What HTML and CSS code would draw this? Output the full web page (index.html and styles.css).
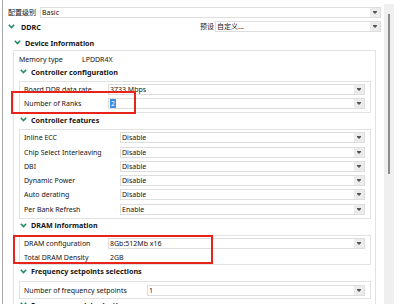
FILE: index.html
```html
<!DOCTYPE html>
<html lang="zh-CN">
<head>
    <meta charset="UTF-8">
    <title>DDRC 配置</title>
    <link rel="stylesheet" href="styles.css">
</head>
<body>

<div class="window">
    <div class="main">

        <!-- config level -->
        <div class="top-row">
            <span class="top-label">配置级别</span>
            <div class="select wide"><span class="value">Basic</span><span class="arrow"></span></div>
        </div>

        <div class="ddrc-row">
            <svg class="chev chev-ddrc" width="7" height="5" viewBox="0 0 7 5"><path d="M0.8 0.8 L3.5 3.6 L6.2 0.8" /></svg>
            <span class="title">DDRC</span>
            <span class="spacer"></span>
            <span class="preset-label">预设</span>
            <div class="select preset"><span class="value">自定义...</span><span class="arrow"></span></div>
        </div>

        <div class="head head-di">
            <svg class="chev" width="7" height="5" viewBox="0 0 7 5"><path d="M0.8 0.8 L3.5 3.6 L6.2 0.8" /></svg>
            <span class="title">Device Information</span>
        </div>

        <div class="outer-box">
            <div class="mem-row">
                <span class="mem-label">Memory type</span>
                <span>LPDDR4X</span>
            </div>

            <div class="head">
                <svg class="chev" width="7" height="5" viewBox="0 0 7 5"><path d="M0.8 0.8 L3.5 3.6 L6.2 0.8" /></svg>
                <span class="title">Controller configuration</span>
            </div>
            <div class="box">
                <div class="row">
                    <span class="label w84">Board DDR data rate</span>
                    <div class="select"><span class="value">3733 Mbps</span><span class="arrow"></span></div>
                </div>
                <div class="row">
                    <span class="label w84">Number of Ranks</span>
                    <div class="select"><span class="value"><span class="picked">2</span></span><span class="arrow"></span></div>
                </div>
            </div>

            <div class="head">
                <svg class="chev" width="7" height="5" viewBox="0 0 7 5"><path d="M0.8 0.8 L3.5 3.6 L6.2 0.8" /></svg>
                <span class="title">Controller features</span>
            </div>
            <div class="box">
                <div class="row">
                    <span class="label w96">Inline ECC</span>
                    <div class="select"><span class="value">Disable</span><span class="arrow"></span></div>
                </div>
                <div class="row">
                    <span class="label w96">Chip Select Interleaving</span>
                    <div class="select"><span class="value">Disable</span><span class="arrow"></span></div>
                </div>
                <div class="row">
                    <span class="label w96">DBI</span>
                    <div class="select"><span class="value">Disable</span><span class="arrow"></span></div>
                </div>
                <div class="row">
                    <span class="label w96">Dynamic Power</span>
                    <div class="select"><span class="value">Disable</span><span class="arrow"></span></div>
                </div>
                <div class="row">
                    <span class="label w96">Auto derating</span>
                    <div class="select"><span class="value">Disable</span><span class="arrow"></span></div>
                </div>
                <div class="row">
                    <span class="label w96">Per Bank Refresh</span>
                    <div class="select"><span class="value">Enable</span><span class="arrow"></span></div>
                </div>
            </div>

            <div class="head">
                <svg class="chev" width="7" height="5" viewBox="0 0 7 5"><path d="M0.8 0.8 L3.5 3.6 L6.2 0.8" /></svg>
                <span class="title">DRAM information</span>
            </div>
            <div class="box box-dram">
                <div class="row">
                    <span class="label w84">DRAM configuration</span>
                    <div class="select"><span class="value">8Gb:512Mb x16</span><span class="arrow"></span></div>
                </div>
                <div class="row">
                    <span class="label w84">Total DRAM Density</span>
                    <span class="plain">2GB</span>
                </div>
            </div>

            <div class="head">
                <svg class="chev" width="7" height="5" viewBox="0 0 7 5"><path d="M0.8 0.8 L3.5 3.6 L6.2 0.8" /></svg>
                <span class="title">Frequency setpoints selections</span>
            </div>
            <div class="box box-freq">
                <div class="row">
                    <span class="label w123">Number of frequency setpoints</span>
                    <div class="select"><span class="value">1</span><span class="arrow"></span></div>
                </div>
            </div>

            <div class="head head-last">
                <svg class="chev" width="7" height="5" viewBox="0 0 7 5"><path d="M0.8 0.8 L3.5 3.6 L6.2 0.8" /></svg>
                <span class="title">Frequency model selection</span>
            </div>
        </div>
    </div>

    <div class="scrollbar"><div class="thumb"></div></div>

    <!-- annotation marks -->
    <div class="mark mark-ranks"></div>
    <div class="mark mark-dram"></div>
</div>

</body>
</html>
```

FILE: styles.css
```css
body {
    margin: 0;
    background: #fff;
    font-family: "Noto Sans", "Noto Sans CJK SC", sans-serif;
    font-size: 7px;
    color: #151515;
}
.window {
    position: relative;
    display: flex;
    width: 400px;
    height: 304px;
    overflow: hidden;
}
.main {
    flex: none;
    width: 382px;
    margin-left: 2px;
    border-left: 1px solid #a8a8a8;
    padding-left: 5px;
    padding-right: 3px;
    box-sizing: border-box;
}

/* selects */
.select {
    display: flex;
    flex: 1;
    height: 11px;
    border: 1px solid #dedede;
    box-sizing: border-box;
    background: #fff;
}
.select .value {
    flex: 1;
    padding-left: 1px;
    line-height: 9px;
    white-space: nowrap;
}
.select .arrow {
    width: 10px;
    background: #ececec;
    position: relative;
}
.select .arrow::before {
    content: "";
    position: absolute;
    left: 3px;
    top: 3px;
    width: 4px;
    height: 1px;
    background: #555;
}
.select .arrow::after {
    content: "";
    position: absolute;
    left: 3px;
    top: 4px;
    border-left: 2px solid transparent;
    border-right: 2px solid transparent;
    border-top: 2px solid #555;
}
.picked {
    background: #3b8fe6;
    color: #fff;
    padding: 0 1px;
}

/* top rows */
.top-row {
    display: flex;
    margin-top: 7px;
    height: 11px;
}
.top-label {
    width: 32px;
    line-height: 11px;
}
.ddrc-row {
    display: flex;
    align-items: center;
    margin-top: 3px;
    height: 11px;
}
.spacer {
    flex: 1;
}
.preset-label {
    margin-right: 1px;
    line-height: 11px;
}
.select.preset {
    flex: none;
    width: 166px;
}

/* group headers */
.head {
    display: flex;
    align-items: center;
    height: 12px;
    margin-top: 2px;
    padding-left: 1px;
    padding-bottom: 3px;
    box-sizing: border-box;
}
.chev {
    flex: none;
    margin-right: 4px;
}
.chev path {
    fill: none;
    stroke: #1f8a5c;
    stroke-width: 1.5;
}
.chev-ddrc {
    margin-right: 6px;
}
.title {
    font-weight: bold;
    font-size: 7.2px;
}
.head-di {
    margin-top: 5px;
    padding-left: 6px;
    padding-bottom: 1px;
}

/* boxes */
.outer-box {
    margin: 1px 5px 0 5px;
    border: 1px solid #e2e2e2;
    border-bottom: none;
    padding: 0 4px 0 5px;
    height: 260px;
}
.mem-row {
    display: flex;
    margin-top: 4px;
    height: 10px;
    line-height: 10px;
}
.mem-label {
    width: 63px;
}
.box {
    margin-top: 2px;
    border: 1px solid #e2e2e2;
    padding: 2px 5px 3px 4px;
    display: flex;
    flex-direction: column;
    gap: 3.25px;
}
.box-dram {
    padding-top: 2px;
    padding-bottom: 1px;
}
.box-freq {
    padding-top: 3px;
    padding-bottom: 2px;
}
.row {
    display: flex;
    height: 11px;
    line-height: 11px;
}
.label {
    flex: none;
    white-space: nowrap;
}
.w84 { width: 84px; }
.w96 { width: 96px; }
.w123 { width: 123px; }
.plain {
    padding-left: 2px;
}
.head-last {
    margin-top: 0;
    padding-bottom: 0;
}

/* scrollbar */
.scrollbar {
    position: relative;
    margin-top: 4px;
    width: 10px;
    height: 300px;
    background: #efefef;
}
.thumb {
    position: absolute;
    left: 4px;
    top: 10px;
    width: 2px;
    height: 160px;
    background: #8c8c8c;
}

/* red marks */
.mark {
    position: absolute;
    border: 2px solid #e8231b;
    box-sizing: border-box;
}
.mark-ranks {
    left: 11px;
    top: 91px;
    width: 125px;
    height: 23px;
}
.mark-dram {
    left: 13px;
    top: 235px;
    width: 200px;
    height: 29px;
}
```
